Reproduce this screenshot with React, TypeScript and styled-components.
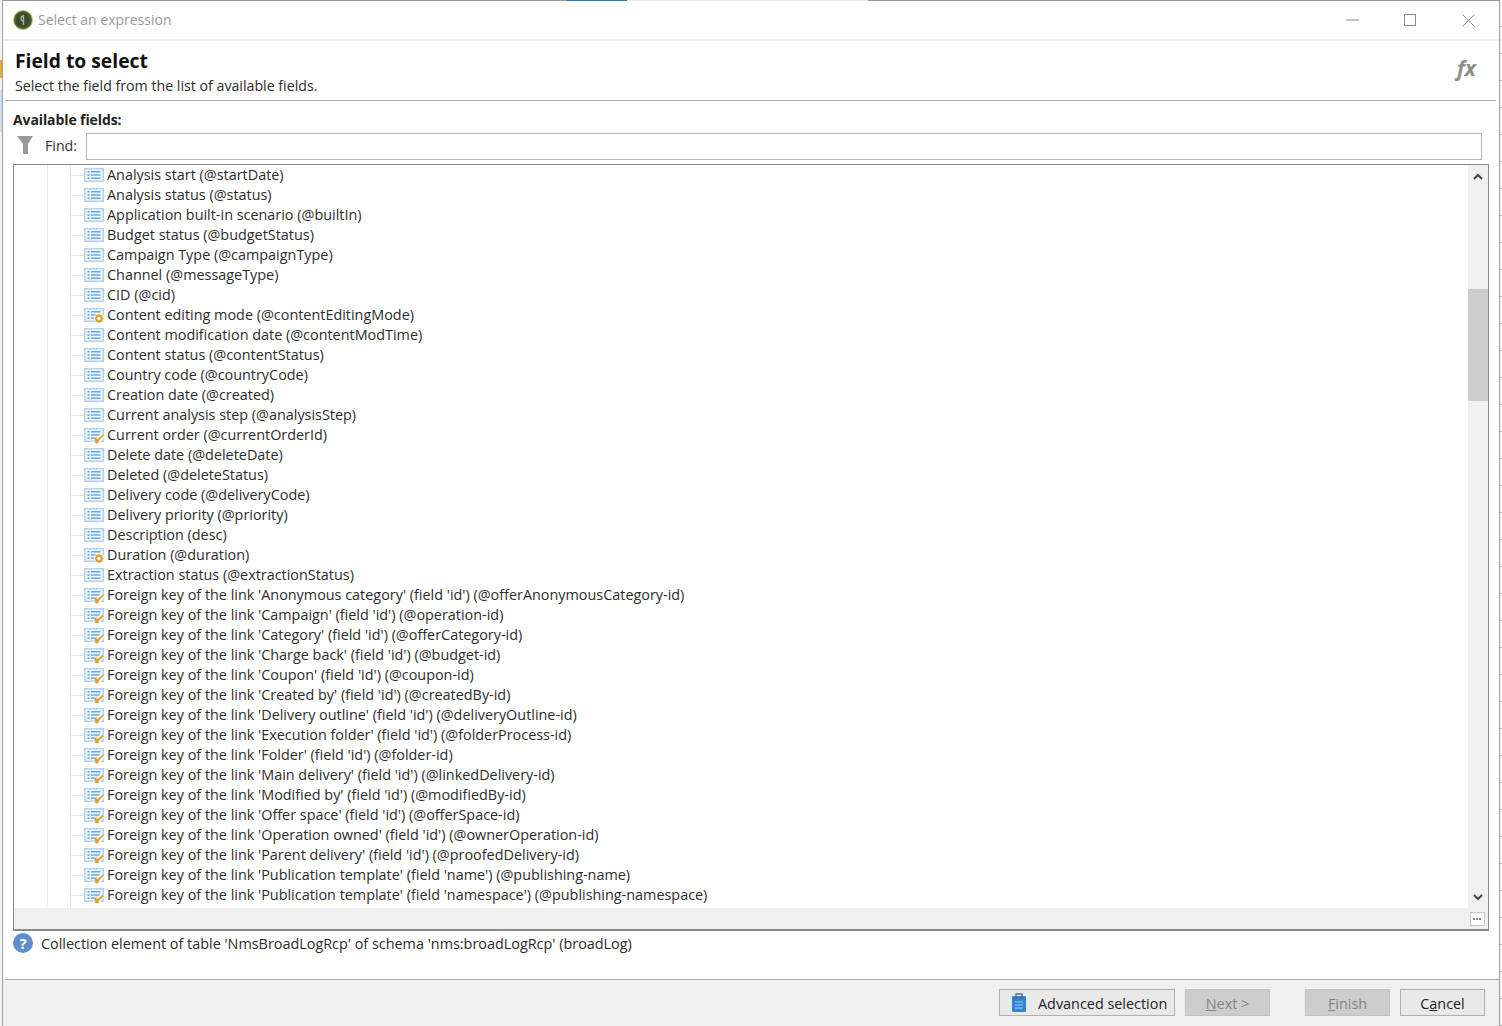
import React from "react";
import styled, { createGlobalStyle } from "styled-components";

const Global = createGlobalStyle`
  html, body { margin: 0; padding: 0; background: #fff; }
  body { font-family: "Open Sans", "Noto Sans", "Liberation Sans", sans-serif; color: #2a2a2a; overflow: hidden; }
`;

const Page = styled.div`
  width: 1502px; height: 1026px; display: flex; overflow: hidden; background: #fff; position: relative;
`;
const LeftEdge = styled.div`
  width: 2px; flex: none; display: flex; flex-direction: column; background: #f2f2f2;
`;
const EdgeBit = styled.div<{ $h: number; $c: string }>`
  height: ${p => p.$h}px; background: ${p => p.$c}; flex: none;
`;
const RightEdge = styled.div`
  width: 2px; flex: none; background: repeating-linear-gradient(#f4f4f4 0 26px, #b5b5b5 26px 27px);
`;
const Win = styled.div`
  flex: 1; min-width: 0; display: flex; flex-direction: column; border-left: 1px solid #a0a0a0; border-right: 1px solid #a0a0a0;
  background: #fff;
`;
const TopStrip = styled.div`display: flex; height: 1px; flex: none;`;
const TopSeg = styled.div<{ $w?: number; $c: string }>`
  background: ${p => p.$c}; ${p => (p.$w ? `width:${p.$w}px;flex:none;` : "flex:1;")}
`;
const TitleBar = styled.div`
  height: 38px; flex: none; display: flex; align-items: center; padding-left: 10px; border-bottom: 2px solid #efefef;
`;
const TitleText = styled.div`
  margin-left: 5px; font-size: 14px; padding-bottom: 2px; color: #9a9a9a;
`;
const WinButtons = styled.div`margin-left: auto; display: flex; align-items: center; padding-right: 2px;`;
const WinBtn = styled.div`
  width: 58px; height: 38px; display: flex; align-items: center; justify-content: center;
`;
const Header = styled.div`
  height: 60px; flex: none; position: relative; border-bottom: 1px solid #a9a9a9; padding: 7px 0 0 10px; box-sizing: border-box;
  margin: 0 3px 0 2px;
`;
const H1 = styled.div`font-size: 19.3px; line-height: 26px; font-weight: 700; color: #111; font-family: "Open Sans", sans-serif;`;
const Sub = styled.div`font-size: 14.2px; line-height: 20px; margin-top: 2px; color: #2b2b2b;`;
const Fx = styled.div`
  position: absolute; right: 20px; top: 13px; font-family: "Open Sans", sans-serif; font-style: italic; font-weight: 700; font-size: 21px; color: #8d8d8d;
`;
const Body = styled.div`flex: 1; min-height: 0; display: flex; flex-direction: column; padding: 9px 10px 0 10px;`;
const Label = styled.div`font-size: 14px; line-height: 20px; font-weight: 700; color: #222; height: 20px; letter-spacing: -.1px;`;
const FindRow = styled.div`display: flex; align-items: center; height: 27px; margin-top: 3px; padding-right: 7px;`;
const FindLabel = styled.div`font-size: 14.2px; margin-left: 12px; width: 41px; color: #333; padding-bottom: 2px;`;
const FindInput = styled.input`
  flex: 1; height: 27px; box-sizing: border-box; border: 1px solid #b4b4b4; background: #fff; outline: none; padding: 0;
`;
const TreeBox = styled.div`
  margin-top: 4px; height: 767px; flex: none; box-sizing: border-box; border: 1px solid #8a8a8a; border-bottom-width: 2px; display: grid;
  grid-template-columns: 1fr 20px; grid-template-rows: 1fr 21px; overflow: hidden;
`;
const List = styled.div`
  overflow: hidden; padding-top: 0;
  background:
    linear-gradient(#ececec, #ececec) 33px 0 / 1px 100% no-repeat,
    linear-gradient(#e2e2e2, #e2e2e2) 56px 0 / 1px 100% no-repeat;
`;
const Row = styled.div`
  height: 20px; display: flex; align-items: center; padding-left: 70px; position: relative; white-space: nowrap;
  &::before { content: ""; position: absolute; left: 56px; top: 10px; width: 14px; border-top: 1px solid #e6e6e6; }
`;
const RowText = styled.span`font-size: 14.4px; margin-left: 3px; padding-bottom: 2px; color: #2c2c2c;`;
const VScroll = styled.div`
  grid-row: 1; grid-column: 2; background: #f0f0f0; position: relative; display: flex; flex-direction: column; align-items: center; justify-content: space-between;
  padding: 8px 1px 7px 0;
`;
const Thumb = styled.div`
  position: absolute; left: 0; right: 0; top: 124px; height: 112px; background: #cdcdcd;
`;
const HScroll = styled.div`grid-row: 2; grid-column: 1; background: #f0f0f0;`;
const Corner = styled.div`
  grid-row: 2; grid-column: 2; background: #f0f0f0; display: flex; align-items: center; justify-content: center; padding-right: 2px;
`;
const CornerBtn = styled.div`
  width: 13px; height: 12px; background: #fff; border: 1px solid #c9c9c9; display: flex; align-items: center; justify-content: center;
  gap: 1px;
`;
const Dot = styled.i`width: 2px; height: 2px; background: #8a8a8a; display: block;`;
const Info = styled.div`display: flex; align-items: center; margin-top: 2px; height: 20px; gap: 8px;`;
const InfoText = styled.div`font-size: 14.4px; color: #2b2b2b;`;
const Footer = styled.div`
  height: 47px; flex: none; box-sizing: border-box; display: flex; align-items: flex-start; padding: 10px 14px 0 0; justify-content: flex-end;
  background: linear-gradient(#a9a9a9, #a9a9a9) 2px 0 / 100% 1px no-repeat, #f0f0f0;
`;
const Btn = styled.button<{ $w: number; $disabled?: boolean; $ml?: number }>`
  width: ${p => p.$w}px; height: 27px; box-sizing: border-box; margin-left: ${p => p.$ml ?? 0}px;
  border: 1px solid ${p => (p.$disabled ? "#c4c4c4" : "#b0b0b0")}; background: ${p => (p.$disabled ? "#cdcdcd" : "#e9e9e9")};
  color: ${p => (p.$disabled ? "#858585" : "#222")};
  font: 14.4px "Open Sans", "Noto Sans", sans-serif; display: flex; align-items: center; justify-content: center; gap: 11px; padding: 1px 0 0;
`;
const IconBtn = styled(Btn)`justify-content: flex-start; padding-left: 11px;`;

type Kind = "p" | "g" | "k";
const rows: [string, Kind][] = [
  ["Analysis start (@startDate)", "p"],
  ["Analysis status (@status)", "p"],
  ["Application built-in scenario (@builtIn)", "p"],
  ["Budget status (@budgetStatus)", "p"],
  ["Campaign Type (@campaignType)", "p"],
  ["Channel (@messageType)", "p"],
  ["CID (@cid)", "p"],
  ["Content editing mode (@contentEditingMode)", "g"],
  ["Content modification date (@contentModTime)", "p"],
  ["Content status (@contentStatus)", "p"],
  ["Country code (@countryCode)", "p"],
  ["Creation date (@created)", "p"],
  ["Current analysis step (@analysisStep)", "p"],
  ["Current order (@currentOrderId)", "k"],
  ["Delete date (@deleteDate)", "p"],
  ["Deleted (@deleteStatus)", "p"],
  ["Delivery code (@deliveryCode)", "p"],
  ["Delivery priority (@priority)", "p"],
  ["Description (desc)", "p"],
  ["Duration (@duration)", "g"],
  ["Extraction status (@extractionStatus)", "p"],
  ["Foreign key of the link 'Anonymous category' (field 'id') (@offerAnonymousCategory-id)", "k"],
  ["Foreign key of the link 'Campaign' (field 'id') (@operation-id)", "k"],
  ["Foreign key of the link 'Category' (field 'id') (@offerCategory-id)", "k"],
  ["Foreign key of the link 'Charge back' (field 'id') (@budget-id)", "k"],
  ["Foreign key of the link 'Coupon' (field 'id') (@coupon-id)", "k"],
  ["Foreign key of the link 'Created by' (field 'id') (@createdBy-id)", "k"],
  ["Foreign key of the link 'Delivery outline' (field 'id') (@deliveryOutline-id)", "k"],
  ["Foreign key of the link 'Execution folder' (field 'id') (@folderProcess-id)", "k"],
  ["Foreign key of the link 'Folder' (field 'id') (@folder-id)", "k"],
  ["Foreign key of the link 'Main delivery' (field 'id') (@linkedDelivery-id)", "k"],
  ["Foreign key of the link 'Modified by' (field 'id') (@modifiedBy-id)", "k"],
  ["Foreign key of the link 'Offer space' (field 'id') (@offerSpace-id)", "k"],
  ["Foreign key of the link 'Operation owned' (field 'id') (@ownerOperation-id)", "k"],
  ["Foreign key of the link 'Parent delivery' (field 'id') (@proofedDelivery-id)", "k"],
  ["Foreign key of the link 'Publication template' (field 'name') (@publishing-name)", "k"],
  ["Foreign key of the link 'Publication template' (field 'namespace') (@publishing-namespace)", "k"],
  ["", "p"],
];

const FieldIcon = ({ kind }: { kind: Kind }) => (
  <svg width="20" height="18" viewBox="0 0 20 18" style={{ flex: "none" }}>
    <rect x=".75" y="2.75" width="18.5" height="12.5" fill="#eef5fc" stroke="#b3d3ee" strokeWidth="1.5" />
    <path d="M3.5 5.8h2M3.5 9h2M3.5 12.2h2" stroke="#5aa0dc" strokeWidth="1.4" />
    <path d="M7 5.8h9.5M7 9h9.5M7 12.2h9.5" stroke="#6aaae0" strokeWidth="1.4" />
    {kind === "g" && (
      <g>
        <circle cx="15" cy="12.5" r="5.2" fill="#fff" />
        <circle cx="15" cy="12.5" r="2.8" fill="none" stroke="#e8a12f" strokeWidth="2.2" />
        <path d="M15 8v1.5M15 15.5V17M10.5 12.5H12M18 12.5h1.5M11.8 9.3l1 1M17.2 14.7l1 1M18.2 9.3l-1 1M12.8 14.7l-1 1" stroke="#e8a12f" strokeWidth="1.2" />
      </g>
    )}
    {kind === "k" && (
      <g>
        <path d="M10.5 17.5l8.5-8" stroke="#fff" strokeWidth="5" />
        <path d="M14 14l5-4.5" stroke="#e9a02c" strokeWidth="2.2" />
        <circle cx="12.8" cy="15" r="2.4" fill="#e9a02c" />
      </g>
    )}
  </svg>
);

export default function App() {
  return (
    <Page>
      <Global />
      <LeftEdge>
        <EdgeBit $h={60} $c="#f2f2f2" />
        <EdgeBit $h={18} $c="#e9a93a" />
        <EdgeBit $h={12} $c="#f2f2f2" />
        <EdgeBit $h={42} $c="#cfdfee" />
      </LeftEdge>
      <Win>
        <TopStrip>
          <TopSeg $w={564} $c="#9a9a9a" />
          <TopSeg $w={60} $c="#1c7fc4" />
          <TopSeg $w={241} $c="#e6e6e6" />
          <TopSeg $c="#9a9a9a" />
        </TopStrip>
        <TitleBar>
          <svg width="20" height="20" viewBox="0 0 20 20">
            <circle cx="10" cy="10" r="9.5" fill="#4a5c34" stroke="#c2cf5a" />
            <circle cx="10" cy="10" r="7" fill="#3c4a30" />
            <path d="M10.5 5v10M10.5 6c-3 0-3.5 5 0 5" stroke="#a8b890" strokeWidth="1.3" fill="none" />
          </svg>
          <TitleText>Select an expression</TitleText>
          <WinButtons>
            <WinBtn>
              <svg width="13" height="2" viewBox="0 0 13 2"><path d="M0 1h13" stroke="#8a8a8a" /></svg>
            </WinBtn>
            <WinBtn>
              <svg width="12" height="12" viewBox="0 0 12 12"><rect x=".5" y=".5" width="11" height="11" fill="none" stroke="#8a8a8a" /></svg>
            </WinBtn>
            <WinBtn>
              <svg width="13" height="13" viewBox="0 0 13 13"><path d="M.5.5l12 12M12.5.5l-12 12" stroke="#8a8a8a" /></svg>
            </WinBtn>
          </WinButtons>
        </TitleBar>
        <Header>
          <H1>Field to select</H1>
          <Sub>Select the field from the list of available fields.</Sub>
          <Fx>fx</Fx>
        </Header>
        <Body>
          <Label>Available fields:</Label>
          <FindRow>
            <svg width="23" height="18" viewBox="0 0 23 18" style={{ flex: "none", marginRight: -3, marginTop: -4 }}>
              <path d="M4 0h16l-5 8v10h-5V8z" fill="#9a9a9a" />
            </svg>
            <FindLabel>Find:</FindLabel>
            <FindInput aria-label="Find" />
          </FindRow>
          <TreeBox>
            <List>
              {rows.map((r, i) => (
                <Row key={i}>
                  <FieldIcon kind={r[1]} />
                  <RowText>{r[0]}</RowText>
                </Row>
              ))}
            </List>
            <VScroll>
              <svg width="10" height="7" viewBox="0 0 10 7"><path d="M1 6l4-4 4 4" fill="none" stroke="#444" strokeWidth="2" /></svg>
              <Thumb />
              <svg width="10" height="7" viewBox="0 0 10 7"><path d="M1 1l4 4 4-4" fill="none" stroke="#444" strokeWidth="2" /></svg>
            </VScroll>
            <HScroll />
            <Corner>
              <CornerBtn><Dot /><Dot /><Dot /></CornerBtn>
            </Corner>
          </TreeBox>
          <Info>
            <svg width="20" height="20" viewBox="0 0 20 20" style={{ flex: "none" }}>
              <circle cx="10" cy="10" r="10" fill="#5f8fcb" />
              <text x="10" y="15.5" textAnchor="middle" fontFamily="Open Sans, sans-serif" fontWeight="700" fontSize="15" fill="#fff">?</text>
            </svg>
            <InfoText>Collection element of table 'NmsBroadLogRcp' of schema 'nms:broadLogRcp' (broadLog)</InfoText>
          </Info>
        </Body>
        <Footer>
          <IconBtn $w={176}>
            <svg width="16" height="20" viewBox="0 0 16 20">
              <rect x="1" y="3" width="14" height="16" rx="1" fill="#2f86d8" />
              <rect x="5" y="1" width="6" height="4" fill="none" stroke="#5a6b80" strokeWidth="1.4" />
              <path d="M4 9h8M4 12h8M4 15h8" stroke="#a8d0f2" strokeWidth="1" />
            </svg>
            Advanced selection
          </IconBtn>
          <Btn $w={85} $ml={10} $disabled><span><u>N</u>ext &gt;</span></Btn>
          <Btn $w={85} $ml={35} $disabled><span><u>F</u>inish</span></Btn>
          <Btn $w={85} $ml={10}><span>C<u>a</u>ncel</span></Btn>
        </Footer>
      </Win>
      <RightEdge />
    </Page>
  );
}
